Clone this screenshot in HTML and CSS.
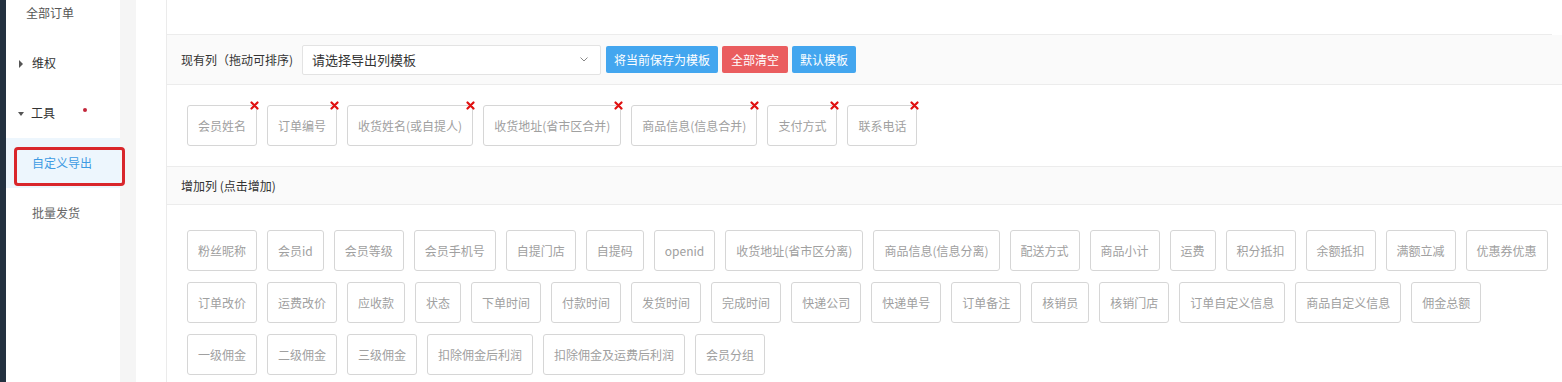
FILE: index.html
```html
<!DOCTYPE html>
<html lang="zh-CN">
<head>
  <meta charset="UTF-8" />
  <meta name="viewport" content="width=device-width, initial-scale=1.0"/>
  <title>自定义导出</title>
  <link rel="stylesheet" href="styles.css">
</head>
<body>
  <div class="layout">
    <div class="rail"></div>

    <aside class="sidebar">
      <ul class="menu">
        <li class="menu-item">全部订单</li>
        <li class="menu-item group"><span class="arrow arrow-right"></span>维权</li>
        <li class="menu-item group"><span class="arrow arrow-down"></span>工具<span class="dot"></span></li>
        <li class="menu-item sub active">自定义导出<span class="mark"></span></li>
        <li class="menu-item sub">批量发货</li>
      </ul>
    </aside>

    <div class="gutter"></div>
    <div class="spacer"></div>

    <main class="panel">
      <div class="panel-top"></div>

      <div class="bar">
        <span class="bar-label">现有列（拖动可排序)</span>
        <div class="select">
          <span>请选择导出列模板</span>
          <svg class="chevron" width="8" height="5" viewBox="0 0 8 5"><path d="M0.5 0.5 L4 4 L7.5 0.5" fill="none" stroke="#888" stroke-width="1"/></svg>
        </div>
        <button class="btn btn-blue">将当前保存为模板</button>
        <button class="btn btn-red">全部清空</button>
        <button class="btn btn-blue">默认模板</button>
      </div>

      <div class="tags current" id="currentTags"></div>

      <div class="bar bar-small">
        <span class="bar-label">增加列 (点击增加)</span>
      </div>

      <div class="tags available" id="availableTags"></div>
    </main>
  </div>

  <script>
    const current = ["会员姓名", "订单编号", "收货姓名(或自提人)", "收货地址(省市区合并)", "商品信息(信息合并)", "支付方式", "联系电话"];
    const available = [
      "粉丝昵称", "会员id", "会员等级", "会员手机号", "自提门店", "自提码", "openid", "收货地址(省市区分离)",
      "商品信息(信息分离)", "配送方式", "商品小计", "运费", "积分抵扣", "余额抵扣", "满额立减", "优惠券优惠",
      "订单改价", "运费改价", "应收款", "状态", "下单时间", "付款时间", "发货时间", "完成时间", "快递公司",
      "快递单号", "订单备注", "核销员", "核销门店", "订单自定义信息", "商品自定义信息", "佣金总额",
      "一级佣金", "二级佣金", "三级佣金", "扣除佣金后利润", "扣除佣金及运费后利润", "会员分组"
    ];

    const closeIcon = `<svg class="close" width="9" height="9" viewBox="0 0 9 9"><path d="M1.5 1.5 L7.5 7.5 M7.5 1.5 L1.5 7.5" stroke="#e01010" stroke-width="2.2" stroke-linecap="round"/></svg>`;

    const currentTags = document.getElementById("currentTags");
    current.forEach(name => {
      currentTags.insertAdjacentHTML("beforeend", `<span class="tag">${name}${closeIcon}</span>`);
    });

    const availableTags = document.getElementById("availableTags");
    available.forEach(name => {
      availableTags.insertAdjacentHTML("beforeend", `<span class="tag">${name}</span>`);
    });
  </script>
</body>
</html>
```

FILE: styles.css
```css
* {
  box-sizing: border-box;
}

body {
  margin: 0;
  font-family: "Noto Sans CJK SC", "Noto Sans", sans-serif;
  font-size: 12px;
  color: #333;
  background-color: #fff;
  overflow: hidden;
}

.layout {
  display: flex;
  height: 382px;
}

.rail {
  width: 6px;
  background-color: #233140;
}

.sidebar {
  width: 114px;
  background-color: #fff;
  position: relative;
  z-index: 2;
}

.menu {
  list-style: none;
  margin: -12px 0 0;
  padding: 0;
}

.menu-item {
  position: relative;
  height: 50px;
  line-height: 50px;
  padding-left: 20px;
  color: #555;
}

.menu-item.group {
  padding-left: 12px;
  color: #333;
}

.menu-item.sub {
  padding-left: 26px;
  color: #666;
}

.menu-item.active {
  background-color: #edf6fd;
  color: #3d9be3;
}

.arrow {
  display: inline-block;
  width: 0;
  height: 0;
  margin-right: 10px;
  vertical-align: middle;
}

.arrow-right {
  border-top: 4px solid transparent;
  border-bottom: 4px solid transparent;
  border-left: 4px solid #555;
  margin-top: -2px;
  margin-left: 1px;
  margin-right: 9px;
}

.arrow-down {
  border-left: 3.5px solid transparent;
  border-right: 3.5px solid transparent;
  border-top: 4px solid #555;
  margin-top: -2px;
  margin-right: 7px;
}

.dot {
  position: absolute;
  left: 77px;
  top: 20px;
  width: 4px;
  height: 4px;
  border-radius: 50%;
  background-color: #c3263a;
}

.mark {
  position: absolute;
  left: 8px;
  top: 9px;
  width: 111px;
  height: 39px;
  border: 3px solid #d9262b;
  border-radius: 4px;
}

.gutter {
  width: 16px;
  background-color: #f5f5f5;
}

.spacer {
  width: 31px;
  border-right: 1px solid #ebebeb;
}

.panel {
  flex: 1;
  padding-right: 10px;
}

.panel-top {
  height: 35px;
  border-bottom: 1px solid #ececec;
}

.bar {
  display: flex;
  align-items: center;
  height: 50px;
  padding-left: 14px;
  margin-right: -10px;
  background-color: #fafafa;
  border-bottom: 1px solid #ececec;
}

.bar-small {
  height: 38px;
}

.bar-label {
  margin-right: 9px;
}

.select {
  display: flex;
  align-items: center;
  justify-content: space-between;
  width: 299px;
  height: 30px;
  padding: 0 12px 0 9px;
  margin-right: 5px;
  background-color: #fff;
  border: 1px solid #e3e3e3;
  border-radius: 2px;
  font-size: 13px;
  color: #333;
}

.btn {
  height: 27px;
  padding: 0 8px;
  margin-right: 4px;
  border: none;
  border-radius: 2px;
  font-family: inherit;
  font-size: 12px;
  color: #fff;
}

.btn-red {
  padding: 0 9px;
  background-color: #ea5d5f;
}

.btn-blue {
  background-color: #43a6ef;
}

.tags {
  display: flex;
  flex-wrap: wrap;
  gap: 11px 10px;
  padding: 20px 10px 20px 20px;
  margin-right: -10px;
}

.tags.current {
  border-bottom: 1px solid #ececec;
}

.tags.available {
  padding-top: 25px;
}

.tag {
  position: relative;
  height: 41px;
  line-height: 39px;
  padding: 0 10px;
  border: 1px solid #d6d6d6;
  border-radius: 3px;
  color: #a0a0a0;
  white-space: nowrap;
  background-color: #fff;
}

.close {
  position: absolute;
  top: -5px;
  right: -3px;
}
```
